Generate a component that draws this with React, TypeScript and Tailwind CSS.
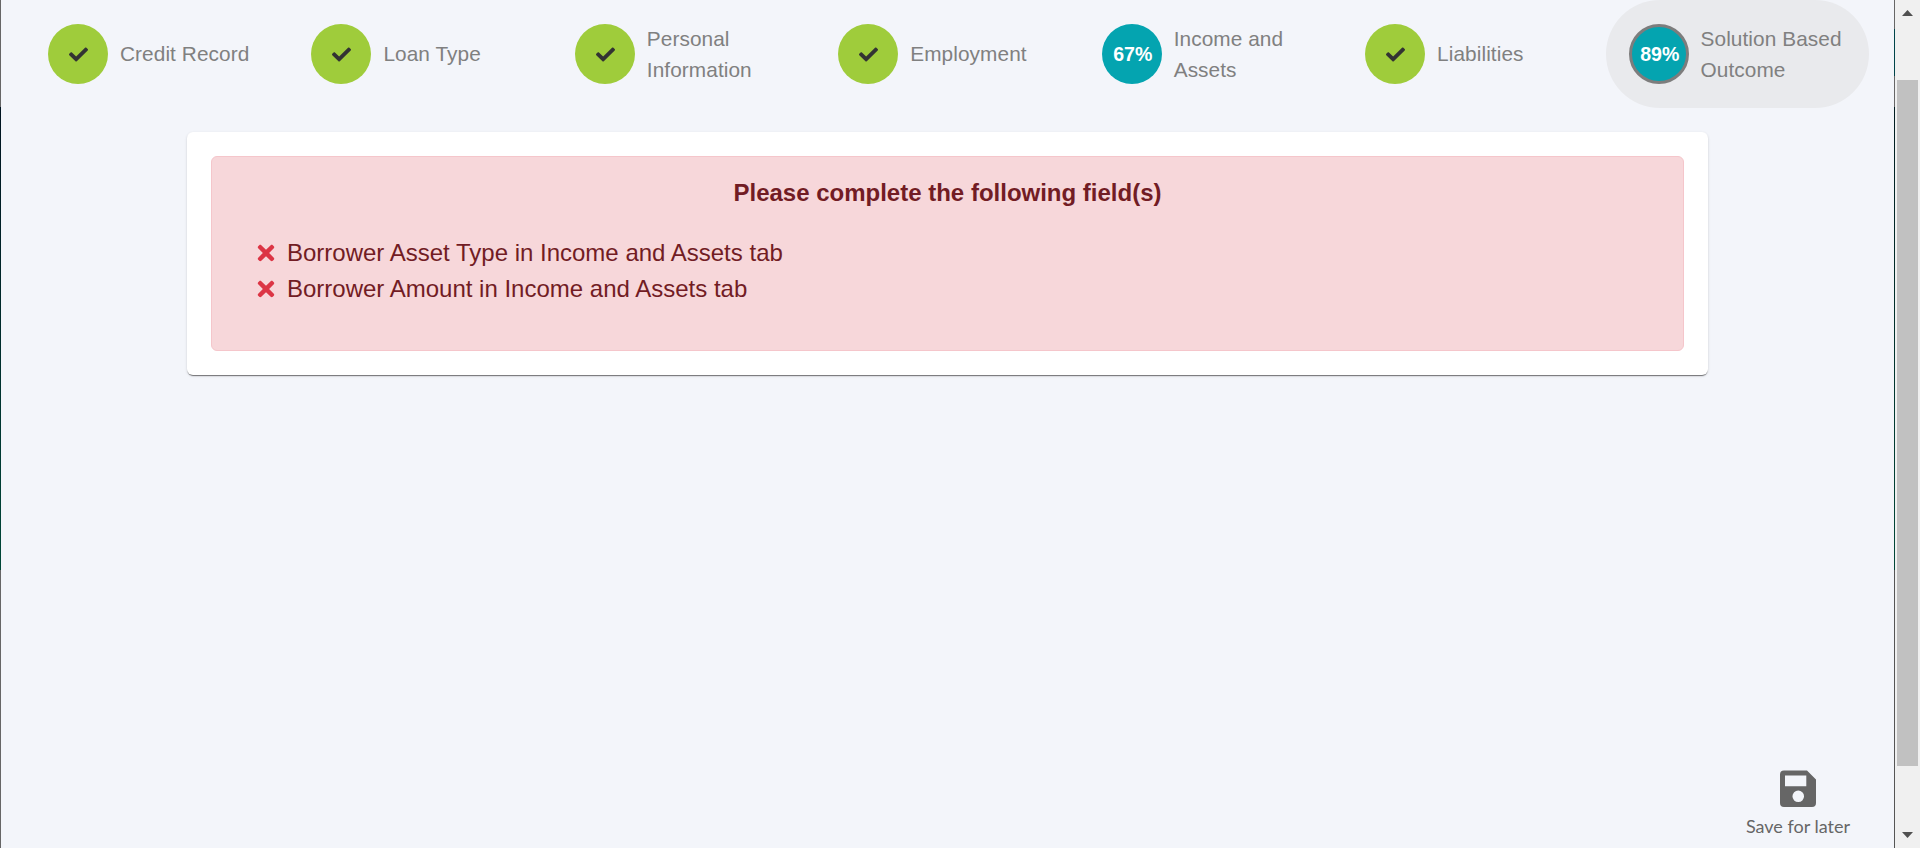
import React from "react";
import { FaCheck, FaTimes } from "react-icons/fa";

type Step = { label: string; percent?: string; active?: boolean };

const steps: Step[] = [
  { label: "Credit Record" },
  { label: "Loan Type" },
  { label: "Personal Information" },
  { label: "Employment" },
  { label: "Income and Assets", percent: "67%" },
  { label: "Liabilities" },
  { label: "Solution Based Outcome", percent: "89%", active: true },
];

const missing = [
  "Borrower Asset Type in Income and Assets tab",
  "Borrower Amount in Income and Assets tab",
];

function StepItem({ label, percent, active }: Step) {
  return (
    <li
      className={`flex h-[108px] min-w-0 flex-1 items-center rounded-[54px] pl-[23px] pr-5 ${
        active ? "bg-[#e9eaed]" : ""
      }`}
    >
      <span
        className={`flex size-[60px] shrink-0 items-center justify-center rounded-full ${
          percent ? "bg-[#04a4b0] pl-[3px]" : "bg-[#9fcc3b] pl-px"
        } ${active ? "border-[3px] border-[#7d7d7d]" : ""}`}
      >
        {percent ? (
          <b className="scale-x-[0.94] text-[20.8px] text-white">{percent}</b>
        ) : (
          <FaCheck className="size-[19px] text-[#333]" />
        )}
      </span>
      <span className="ml-3 text-[20.8px] leading-[31.2px] tracking-[0.08px] text-[#808080]">{label}</span>
    </li>
  );
}

function LeftEdgeLine() {
  return (
    <div className="flex w-px shrink-0 flex-col">
      <div className="h-[107px] bg-[#666]" />
      <div className="h-[463px] bg-gradient-to-b from-[#001420] to-[#004838]" />
      <div className="flex-1 bg-[#666]" />
    </div>
  );
}

function RightEdgeLine() {
  return (
    <div className="flex w-px shrink-0 flex-col">
      <div className="h-[29px] bg-[#666]" />
      <div className="h-[47px] bg-[#00444a]" />
      <div className="h-[31px] bg-[#666]" />
      <div className="h-[463px] bg-gradient-to-b from-[#001c20] to-[#004838]" />
      <div className="flex-1 bg-[#555]" />
    </div>
  );
}

function Scrollbar() {
  return (
    <div className="flex w-[25px] shrink-0 flex-col items-center bg-[#f0f0f0]">
      <svg className="mt-[10px] h-[6px] w-[11px]" viewBox="0 0 11 6">
        <path d="M0 6 5.5 0 11 6Z" fill="#505050" />
      </svg>
      <div className="mt-16 h-[686px] w-[21px] bg-[#c1c1c1]" />
      <svg className="mt-[66px] h-[6px] w-[11px]" viewBox="0 0 11 6">
        <path d="M0 0 5.5 6 11 0Z" fill="#505050" />
      </svg>
    </div>
  );
}

export default function App() {
  return (
    <div className="flex h-[848px] w-[1920px] overflow-hidden bg-[#f3f5fa] font-['Liberation_Sans',Arial,sans-serif]">
      <LeftEdgeLine />
      <main className="flex min-w-0 flex-1 flex-col">
        <ul className="flex pl-6 pr-[25px]">
          {steps.map((s) => (
            <StepItem key={s.label} {...s} />
          ))}
        </ul>
        <section className="ml-[186px] mt-6 h-[243px] w-[1521px] rounded-[6px] bg-white p-6 shadow-[0_2px_1px_-1px_rgba(0,0,0,0.4),0_1px_1px_0_rgba(0,0,0,0.14),0_1px_3px_0_rgba(0,0,0,0.12)]">
          <div className="h-[195px] rounded-[6px] border border-[#f5c6cb] bg-[#f7d7da] px-[43px] pt-[18px] text-2xl leading-9 text-[#721c24]">
            <h1 className="text-center font-bold">Please complete the following field(s)</h1>
            <ul className="mt-6">
              {missing.map((m) => (
                <li key={m} className="flex items-center">
                  <FaTimes className="mr-[10px] h-6 w-[22px] text-[#dc3545]" />
                  {m}
                </li>
              ))}
            </ul>
          </div>
        </section>
        <button className="mb-2 ml-auto mr-11 mt-auto flex flex-col items-center font-[Lato,sans-serif] text-[18px] leading-[27px] text-[#666]">
          <svg className="mb-[6px] h-[37px] w-[36px]" viewBox="0 0 36 37" fill="none">
            <path
              fillRule="evenodd"
              d="M4 0.5H27L36 9.500V33a4 4 0 0 1-4 4H4a4 4 0 0 1-4-4V4.500a4 4 0 0 1 4-4ZM5 5.500V16.300H26.300V5.500ZM18.250 20.500a5.800 5.800 0 1 0 0 11.600a5.800 5.800 0 0 0 0-11.600Z"
              fill="#666"
            />
          </svg>
          Save for later
        </button>
      </main>
      <RightEdgeLine />
      <Scrollbar />
    </div>
  );
}
